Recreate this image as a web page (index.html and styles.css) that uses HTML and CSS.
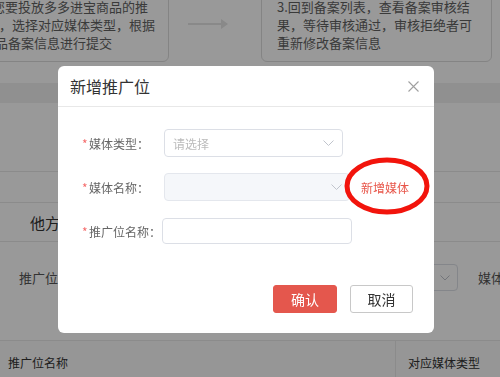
FILE: index.html
```html
<!DOCTYPE html>
<html lang="zh-CN">
<head>
<meta charset="utf-8">
<title>新增推广位</title>
<link rel="stylesheet" href="styles.css">
</head>
<body>
<div class="page">
  <div class="steps">
    <div class="card card-1">
      <div class="ln ln-1">您要投放多多进宝商品的推</div>
      <div class="ln ln-2">，选择对应媒体类型，根据</div>
      <div class="ln ln-3">品备案信息进行提交</div>
    </div>
    <div class="arrow">
      <svg width="40" height="10" viewBox="0 0 40 10"><line x1="0" y1="5" x2="34" y2="5" stroke="#e4e4e4" stroke-width="2"/><polygon points="33,0 40,5 33,10" fill="#e4e4e4"/></svg>
    </div>
    <div class="card card-2">
      <div class="ln">3.回到备案列表，查看备案审核结</div>
      <div class="ln">果，等待审核通过，审核拒绝者可</div>
      <div class="ln">重新修改备案信息</div>
    </div>
  </div>
  <div class="band"></div>
  <div class="section sec-a"></div>
  <div class="section sec-b"></div>
  <div class="tabs"><span class="tab">他方</span></div>
  <div class="filter">
    <span class="f-label f-label-1">推广位</span>
    <div class="f-select">
      <svg class="chev" width="10" height="6" viewBox="0 0 10 6"><polyline points="0.5,0.5 5,5 9.5,0.5" fill="none" stroke="#c0c4cc" stroke-width="1"/></svg>
    </div>
    <span class="f-label f-label-2">媒体类型</span>
  </div>
  <div class="thead">
    <div class="th th-1">推广位名称</div>
    <div class="th th-2">对应媒体类型</div>
  </div>
</div>

<div class="mask"></div>

<div class="dialog">
  <div class="d-head">
    <span class="d-title">新增推广位</span>
    <svg class="d-close" width="11" height="11" viewBox="0 0 11 11"><path d="M0.5 0.5 L10.5 10.5 M10.5 0.5 L0.5 10.5" stroke="#a0a0a0" stroke-width="1.1" fill="none"/></svg>
  </div>
  <div class="d-body">
    <div class="row row-1">
      <label class="lbl lbl-a"><span class="star">*</span>媒体类型：</label>
      <div class="sel sel-1">
        <span class="ph">请选择</span>
        <svg class="chev" width="11" height="6" viewBox="0 0 11 6"><polyline points="0.5,0.5 5.5,5.5 10.5,0.5" fill="none" stroke="#c0c4cc" stroke-width="1"/></svg>
      </div>
    </div>
    <div class="row row-2">
      <label class="lbl lbl-a"><span class="star">*</span>媒体名称：</label>
      <div class="sel sel-2">
        <svg class="chev" width="11" height="6" viewBox="0 0 11 6"><polyline points="0.5,0.5 5.5,5.5 10.5,0.5" fill="none" stroke="#c0c4cc" stroke-width="1"/></svg>
      </div>
      <span class="add-link">新增媒体
        <svg class="ring" width="86" height="58" viewBox="0 0 86 58"><ellipse cx="43" cy="29" rx="40" ry="26" fill="none" stroke="#f2140c" stroke-width="5"/></svg>
      </span>
    </div>
    <div class="row row-3">
      <label class="lbl lbl-b"><span class="star">*</span>推广位名称：</label>
      <div class="inp"></div>
    </div>
  </div>
  <div class="d-foot">
    <button class="btn btn-ok">确认</button>
    <button class="btn btn-cancel">取消</button>
  </div>
</div>
</body>
</html>
```

FILE: styles.css
```css
* { box-sizing: border-box; }
html, body { margin: 0; padding: 0; }
body {
  width: 500px;
  height: 377px;
  overflow: hidden;
  background: #fff;
  font-family: "Noto Sans CJK SC", "Noto Sans", sans-serif;
  color: #333;
}
.page { width: 500px; }

.steps {
  display: flex;
  align-items: flex-start;
  margin-top: -12px;
}
.card {
  flex-shrink: 0;
  border: 1px solid #dcdcdc;
  border-radius: 6px;
  padding: 9px 0;
  height: 74px;
  font-size: 13px;
  line-height: 18px;
  color: #626262;
  white-space: nowrap;
  overflow: hidden;
}
.card-1 { width: 190px; margin-left: -21px; }
.card-1 .ln-1 { margin-left: 12px; }
.card-1 .ln-2 { margin-left: 19px; }
.card-1 .ln-3 { margin-left: 15px; }
.card-2 { width: 231px; padding-left: 15px; }
.arrow {
  flex-shrink: 0;
  width: 92px;
  display: flex;
  justify-content: center;
  padding-top: 31px;
  padding-right: 14px;
}
.arrow svg { display: block; }

.band { height: 20px; margin-top: 21px; background: #f0f0f0; }
.section { border-bottom: 1px solid #e8e8e8; }
.sec-a { height: 69px; }
.sec-b { height: 31px; }
.tabs {
  height: 39px;
  border-bottom: 1px solid #e8e8e8;
  display: flex;
  align-items: center;
  padding-left: 30px;
}
.tab { font-size: 15px; color: #333; }
.filter {
  height: 98px;
  padding-top: 22px;
  padding-left: 19px;
  display: flex;
  align-items: flex-start;
  white-space: nowrap;
}
.f-label { flex-shrink: 0; font-size: 13px; color: #555; line-height: 27px; }
.f-label-1 { width: 78px; }
.f-select {
  flex-shrink: 0;
  width: 353px;
  height: 27px;
  margin-left: 8px;
  border: 1px solid #dcdfe6;
  border-radius: 4px;
  display: flex;
  align-items: center;
  justify-content: flex-end;
  padding-right: 7px;
}
.f-label-2 { margin-left: 20px; }
.thead {
  display: grid;
  grid-template-columns: 395px 1fr;
  border-top: 1px solid #e8e8e8;
  background: #fafafa;
  height: 44px;
}
.th {
  font-size: 12px;
  color: #333;
  display: flex;
  align-items: center;
  white-space: nowrap;
}
.th-1 { padding-left: 8px; }
.th-2 { padding-left: 12px; border-left: 1px solid #e8e8e8; }

.mask {
  position: fixed;
  inset: 0;
  background: rgba(0, 0, 0, 0.4);
}

.dialog {
  position: absolute;
  left: 58px;
  top: 66px;
  width: 376px;
  height: 267px;
  background: #fff;
  border-radius: 6px;
  display: flex;
  flex-direction: column;
}
.d-head {
  height: 41px;
  border-bottom: 1px solid #e8e8e8;
  display: flex;
  align-items: center;
  justify-content: space-between;
  padding: 0 15px 0 12px;
}
.d-title { font-size: 16px; color: #333; }
.d-close { display: block; }

.d-body { padding: 22px 0 0 24px; }
.row { display: flex; align-items: center; }
.row-2 { margin-top: 16px; }
.row-3 { margin-top: 17px; }
.lbl { font-size: 12px; color: #666; white-space: nowrap; }
.lbl-a { width: 82px; }
.lbl-b { width: 80px; }
.star { color: #f56c6c; margin-right: 2px; display: inline-block; width: 5px; }
.sel {
  height: 28px;
  border: 1px solid #dcdfe6;
  border-radius: 4px;
  display: flex;
  align-items: center;
  justify-content: space-between;
  padding: 0 8px 0 8px;
}
.sel-1 { width: 179px; }
.sel-2 { width: 186px; background: #f5f7fa; border-color: #e4e7ed; justify-content: flex-end; padding-right: 7px; }
.ph { font-size: 12px; color: #bbb; }
.chev { display: block; }
.add-link {
  position: relative;
  margin-left: 11px;
  font-size: 12px;
  color: #e8564a;
  white-space: nowrap;
}
.ring {
  position: absolute;
  left: -17px;
  top: -22px;
}
.inp {
  width: 190px;
  height: 26px;
  border: 1px solid #dcdfe6;
  border-radius: 4px;
}

.d-foot {
  margin-top: auto;
  padding: 0 21px 20px 0;
  display: flex;
  justify-content: flex-end;
  gap: 13px;
}
.btn {
  height: 28px;
  font-family: inherit;
  font-size: 14px;
  border-radius: 3px;
  padding: 0;
  cursor: pointer;
}
.btn-ok { width: 64px; background: #e4574d; color: #fff; border: 1px solid #e4574d; }
.btn-cancel { width: 63px; background: #fff; color: #333; border: 1px solid #c8c8c8; }
```
